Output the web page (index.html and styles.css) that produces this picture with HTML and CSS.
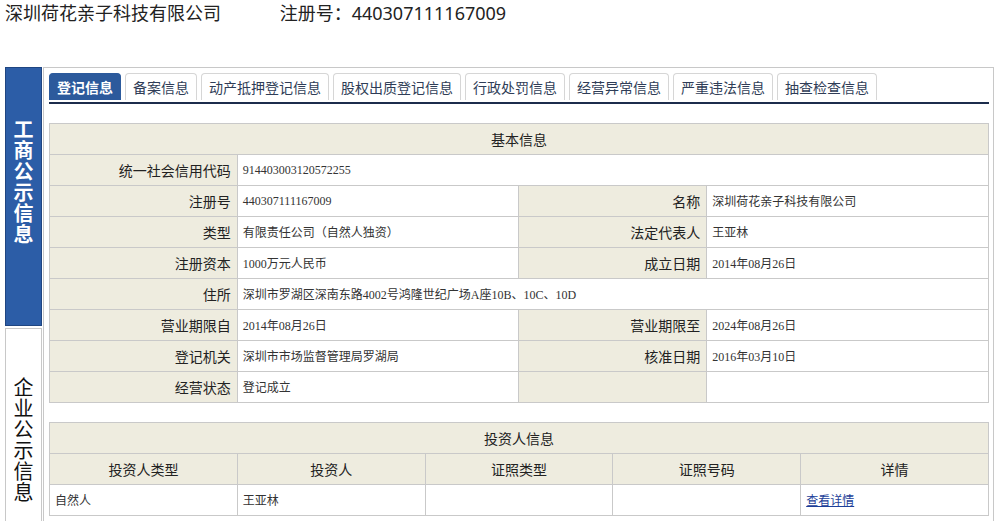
FILE: index.html
```html
<!DOCTYPE html>
<html lang="zh-CN">
<head>
    <meta charset="UTF-8">
    <title>深圳荷花亲子科技有限公司</title>
    <link rel="stylesheet" href="styles.css">
</head>
<body>
    <div class="top">
        <span class="company">深圳荷花亲子科技有限公司</span>
        <span class="regno">注册号：440307111167009</span>
    </div>
    <div class="layout">
        <div class="side">
            <div class="side-box active">工商公示信息</div>
            <div class="side-box">企业公示信息</div>
        </div>
        <div class="panel">
            <div class="tabs">
                <a href="#" class="tab current">登记信息</a>
                <a href="#" class="tab">备案信息</a>
                <a href="#" class="tab">动产抵押登记信息</a>
                <a href="#" class="tab">股权出质登记信息</a>
                <a href="#" class="tab">行政处罚信息</a>
                <a href="#" class="tab">经营异常信息</a>
                <a href="#" class="tab">严重违法信息</a>
                <a href="#" class="tab">抽查检查信息</a>
            </div>

            <!-- 基本信息 -->
            <table class="info">
                <colgroup>
                    <col class="w-label">
                    <col class="w-value">
                    <col class="w-label">
                    <col class="w-value">
                </colgroup>
                <tr><th colspan="4" class="title">基本信息</th></tr>
                <tr>
                    <th class="label">统一社会信用代码</th>
                    <td colspan="3">914403003120572255</td>
                </tr>
                <tr>
                    <th class="label">注册号</th>
                    <td>440307111167009</td>
                    <th class="label">名称</th>
                    <td>深圳荷花亲子科技有限公司</td>
                </tr>
                <tr>
                    <th class="label">类型</th>
                    <td>有限责任公司（自然人独资）</td>
                    <th class="label">法定代表人</th>
                    <td>王亚林</td>
                </tr>
                <tr>
                    <th class="label">注册资本</th>
                    <td>1000万元人民币</td>
                    <th class="label">成立日期</th>
                    <td>2014年08月26日</td>
                </tr>
                <tr>
                    <th class="label">住所</th>
                    <td colspan="3">深圳市罗湖区深南东路4002号鸿隆世纪广场A座10B、10C、10D</td>
                </tr>
                <tr>
                    <th class="label">营业期限自</th>
                    <td>2014年08月26日</td>
                    <th class="label">营业期限至</th>
                    <td>2024年08月26日</td>
                </tr>
                <tr>
                    <th class="label">登记机关</th>
                    <td>深圳市市场监督管理局罗湖局</td>
                    <th class="label">核准日期</th>
                    <td>2016年03月10日</td>
                </tr>
                <tr>
                    <th class="label">经营状态</th>
                    <td>登记成立</td>
                    <th class="label"></th>
                    <td></td>
                </tr>
            </table>

            <!-- 投资人信息 -->
            <table class="info investors">
                <colgroup>
                    <col class="w-fifth">
                    <col class="w-fifth">
                    <col class="w-fifth">
                    <col class="w-fifth">
                    <col class="w-fifth">
                </colgroup>
                <tr><th colspan="5" class="title">投资人信息</th></tr>
                <tr>
                    <th class="col">投资人类型</th>
                    <th class="col">投资人</th>
                    <th class="col">证照类型</th>
                    <th class="col">证照号码</th>
                    <th class="col">详情</th>
                </tr>
                <tr>
                    <td>自然人</td>
                    <td>王亚林</td>
                    <td></td>
                    <td></td>
                    <td><a href="#" class="detail">查看详情</a></td>
                </tr>
            </table>
        </div>
    </div>
</body>
</html>
```

FILE: styles.css
```css
body {
    margin: 0;
    font-family: "Noto Sans", "Noto Sans CJK SC", sans-serif;
    color: #222;
    background: #fff;
}
.top {
    height: 67px;
    padding-left: 5px;
    font-size: 18px;
    line-height: 26px;
    box-sizing: border-box;
}
.regno {
    margin-left: 54px;
}
.layout {
    display: flex;
    padding-left: 5px;
    gap: 1px;
}
/* left column */
.side {
    width: 37px;
    display: flex;
    flex-direction: column;
    gap: 2px;
}
.side-box {
    height: 193px;
    box-sizing: border-box;
    border: 1px solid #c8c8c8;
    border-bottom: none;
    padding-top: 47px;
    font-family: "Noto Sans CJK SC", sans-serif;
    font-size: 20px;
    line-height: 21px;
    text-align: center;
    color: #111;
}
.side-box.active {
    height: 259px;
    background-color: #2c5da7;
    border: 1px solid #1f4581;
    color: #fff;
    font-weight: bold;
    padding-top: 50px;
}
/* main panel */
.panel {
    width: 951px;
    box-sizing: border-box;
    border: 1px solid #c8c8c8;
    border-bottom: none;
    padding: 5px 3px 0 5px;
    height: 454px;
}
.tabs {
    display: flex;
    gap: 4px;
    padding-bottom: 2px;
    border-bottom: 2px solid #1c2c4c;
    width: 940px;
}
.tab {
    display: block;
    height: 27px;
    box-sizing: border-box;
    padding: 0 7px;
    border: 1px solid #d6d6d6;
    border-bottom: none;
    border-radius: 4px 4px 0 0;
    font-family: "Noto Sans CJK SC", sans-serif;
    font-size: 14px;
    line-height: 26px;
    color: #2f3d57;
    text-decoration: none;
    background-color: #fff;
}
.tab.current {
    background-color: #2c5a9c;
    border-color: #2c5a9c;
    color: #fff;
    font-weight: bold;
}
/* tables */
.info {
    width: 940px;
    border-collapse: collapse;
    margin-top: 19px;
    table-layout: fixed;
}
.w-label { width: 20%; }
.w-value { width: 30%; }
.w-fifth { width: 20%; }
.info th,
.info td {
    border: 1px solid #c9c9c9;
    height: 30px;
    padding: 0;
}
.info td {
    padding-left: 5px;
    font-family: "Liberation Serif", "Noto Sans CJK SC", serif;
    font-size: 12px;
    color: #333;
    background-color: #fff;
}
.info th {
    font-family: "Noto Sans CJK SC", sans-serif;
    font-size: 14px;
    font-weight: normal;
    color: #222;
    background-color: #eeecdf;
}
.info th.label {
    text-align: right;
    padding-right: 6px;
}
.info th.title,
.info th.col {
    text-align: center;
}
.detail {
    color: #1d3f99;
    text-decoration: underline;
}
```
